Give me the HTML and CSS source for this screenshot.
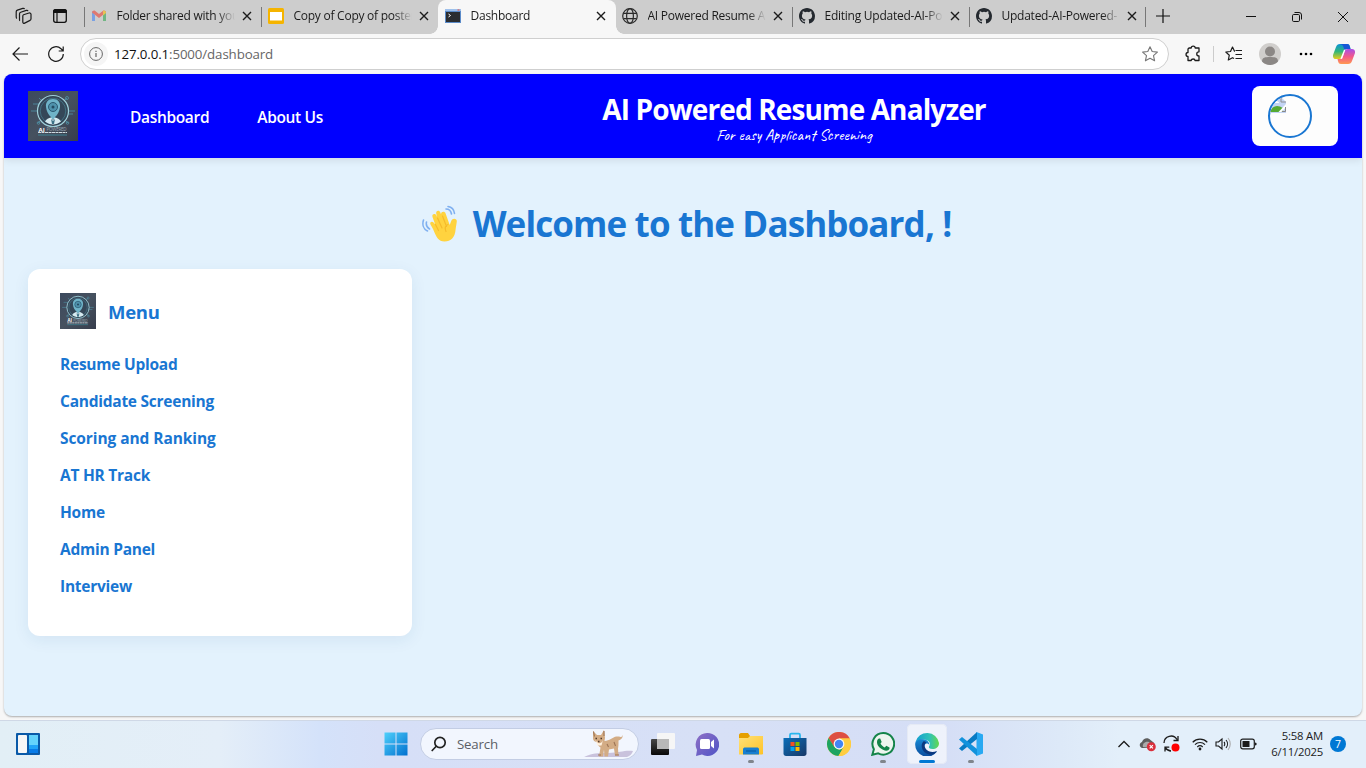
FILE: index.html
```html
<!DOCTYPE html>
<html lang="en">
<head>
<meta charset="utf-8">
<title>Dashboard</title>
<link rel="stylesheet" href="styles.css">
</head>
<body>
<svg class="defs" width="0" height="0" aria-hidden="true">
  <defs>
    <linearGradient id="slate" x1="0" y1="0" x2="1" y2="1"><stop offset="0" stop-color="#3c4a5e"/><stop offset=".5" stop-color="#46515f"/><stop offset="1" stop-color="#373d4c"/></linearGradient>
    <symbol id="logo" viewBox="0 0 50 50">
      <rect width="50" height="50" fill="url(#slate)"/>
      <g fill="none" stroke="#4f93a8" stroke-width=".8"><path d="M3 20h7M40 20h7M5 13h6v4M39 23h6M11 7l3 3M39 7l-3 3M10 32l3-3M40 32l-3-3"/><circle cx="39" cy="7" r="1.5"/><circle cx="10.500" cy="32" r="1.300"/><circle cx="39.500" cy="32" r="1.300"/></g>
      <circle cx="25" cy="20" r="15.500" fill="#354758" stroke="#9fd0da" stroke-width="1.200"/>
      <circle cx="25" cy="20" r="12.800" fill="none" stroke="#457b8d" stroke-width=".8"/>
      <path d="M25 8c-5 0-7.500 3.500-7 8 .4 4 2.500 8 5 10v2h4v-2c2.500-2 4.600-6 5-10 .5-4.500-2-8-7-8z" fill="#6fb3c8"/>
      <circle cx="25" cy="16" r="4.500" fill="#4f92ac" stroke="#2b5a72"/><circle cx="25" cy="16" r="1.500" fill="#244c62"/>
      <path d="M17 30.500c1-2.500 4-3.500 6-4l2 2.500 2-2.500c2 .5 5 1.500 6 4-5 4-11 4-16 0z" fill="#d6eaf0"/><path d="M23 28l2 2 2-2-1 5h-2z" fill="#3b7186"/>
      <text x="10.500" y="40.500" class="logo-ai">AI</text><text x="18.500" y="39.800" class="logo-word" textLength="20">POWERED</text>
      <path d="M10 41.500h29" stroke="#d0dce2" stroke-width="1.200" stroke-dasharray="3 .5"/><path d="M10 44h29" stroke="#3f93a3" stroke-width=".8"/>
    </symbol>
    <symbol id="close" viewBox="0 0 10 10"><path d="M1 1l8 8M9 1L1 9" stroke="#1b1b1b" stroke-width="1.400"/></symbol>
    <symbol id="github" viewBox="0 0 16 16"><path fill="#24292f" d="M8 0C3.580 0 0 3.580 0 8c0 3.540 2.290 6.530 5.470 7.590.4.070.55-.17.55-.38 0-.19-.01-.82-.01-1.490-2.010.37-2.530-.49-2.690-.94-.09-.23-.48-.94-.82-1.130-.28-.15-.68-.52-.01-.53.63-.01 1.080.58 1.230.82.72 1.210 1.870.87 2.330.66.070-.52.28-.87.51-1.070-1.780-.2-3.640-.89-3.640-3.950 0-.87.31-1.590.82-2.150-.08-.2-.36-1.020.08-2.120 0 0 .67-.21 2.200.82a7.400 7.400 0 0 1 4 0c1.530-1.040 2.200-.82 2.200-.82.44 1.100.16 1.920.08 2.120.51.56.82 1.270.82 2.150 0 3.070-1.870 3.750-3.650 3.950.29.25.54.73.54 1.480 0 1.070-.01 1.930-.01 2.200 0 .21.15.46.55.38A8 8 0 0 0 16 8c0-4.420-3.580-8-8-8z"/></symbol>
  </defs>
</svg>

<div class="tabbar">
  <div class="tab-lead">
    <svg width="18" height="18" viewBox="0 0 18 18" fill="none" stroke="#1b1b1b" stroke-width="1.200"><path d="M8.500 7.700l5.500-1.700c1-.3 2 .3 2 1.300v4.500c0 .8-.3 1.300-1 1.600l-5.300 2.700c-1 .5-1.900 0-1.900-1V9.200c0-.8.200-1.300.7-1.500z"/><path d="M5 13.700c-.5-.2-.5-.5-.5-1.200V6.800c0-.9.300-1.300 1.200-1.600l5.600-1.800c.8-.2 1.500.1 1.700.8M2 11.500c-.6-.2-.8-.7-.8-1.400V4.800c0-1 .3-1.400 1.200-1.700l5.400-1.700c.8-.2 1.500.1 1.700.7"/></svg>
    <svg width="16" height="16" viewBox="0 0 16 16"><rect x="1.700" y="1.700" width="12.600" height="12.600" rx="2" fill="none" stroke="#111" stroke-width="1.300"/><path d="M1 5V3.500C1 2 2 1 3.500 1h9C14 1 15 2 15 3.500V5z" fill="#111"/><path d="M5 5v9" stroke="#111" stroke-width="1.200"/></svg>
  </div>
  <div class="tab ruled">
    <svg class="favicon" viewBox="0 0 16 16" opacity=".6"><path d="M1 3v10h3V7z" fill="#4285f4"/><path d="M15 3v10h-3V7z" fill="#34a853"/><path d="M1 4.500C1 2.800 3 2 4.300 3L8 5.900 11.700 3C13 2 15 2.800 15 4.500L8 10z" fill="#ea4335"/><path d="M12 3v4.500l3-2.500c0-2-1.700-3-3-2z" fill="#fbbc04"/></svg>
    <span class="tab-label">Folder shared with you</span><svg class="tab-close"><use href="#close"/></svg>
  </div>
  <div class="tab ruled">
    <svg class="favicon" viewBox="0 0 16 16"><rect width="16" height="16" rx="1.500" fill="#f5b400"/><rect x="2" y="4" width="12" height="8.500" fill="#fff"/></svg>
    <span class="tab-label">Copy of Copy of poster</span><svg class="tab-close"><use href="#close"/></svg>
  </div>
  <div class="tab active">
    <svg class="favicon" viewBox="0 0 16 16"><rect y="1" width="16" height="14" fill="#5b8bc9"/><path d="M0 1h16v2H0z" fill="#9fc1ec"/><path d="M12.500 1.500h2v1h-2z" fill="#f14b3a"/><rect x="1" y="4" width="14" height="10" fill="#2b2d31"/><path d="M3.500 6l2 1.500-2 1.500" fill="none" stroke="#fff"/></svg>
    <span class="tab-label">Dashboard</span><svg class="tab-close"><use href="#close"/></svg>
  </div>
  <div class="tab after-active">
    <svg class="favicon" viewBox="0 0 16 16" fill="none" stroke="#2b2b2b" stroke-width="1.200"><circle cx="8" cy="8" r="7.300"/><ellipse cx="8" cy="8" rx="3.400" ry="7.300"/><path d="M1.500 5.300h13M1.500 10.700h13"/></svg>
    <span class="tab-label">AI Powered Resume A</span><svg class="tab-close"><use href="#close"/></svg>
  </div>
  <div class="tab ruled">
    <svg class="favicon"><use href="#github"/></svg>
    <span class="tab-label">Editing Updated-AI-Po</span><svg class="tab-close"><use href="#close"/></svg>
  </div>
  <div class="tab ruled last">
    <svg class="favicon"><use href="#github"/></svg>
    <span class="tab-label">Updated-AI-Powered-</span><svg class="tab-close"><use href="#close"/></svg>
  </div>
  <div class="new-tab"><svg width="14" height="14" viewBox="0 0 14 14"><path d="M7 0v14M0 7h14" stroke="#111" stroke-width="1.200"/></svg></div>
  <div class="window-controls">
    <svg width="10" height="10" viewBox="0 0 10 10"><path d="M0 4.500h10" stroke="#111"/></svg>
    <svg width="10" height="10" viewBox="0 0 10 10" fill="none" stroke="#111"><rect x=".5" y="2.500" width="7" height="7" rx="1.200"/><path d="M2.500.5H7A2.500 2.500 0 0 1 9.500 3v4.500"/></svg>
    <svg width="10" height="10" viewBox="0 0 10 10"><path d="M0 0l10 10M10 0L0 10" stroke="#111"/></svg>
  </div>
</div>

<div class="toolbar">
  <svg class="nav-icon" width="16" height="14" viewBox="0 0 16 14" fill="none" stroke="#1b1b1b" stroke-width="1.200"><path d="M16 7H1M7.500.5L1 7l6.500 6.500"/></svg>
  <svg class="nav-icon" width="16" height="16" viewBox="0 0 16 16" fill="none" stroke="#1b1b1b" stroke-width="1.200"><path d="M15.300 8A7.300 7.300 0 1 1 13 2.700L15 5M15.200.5V5h-4.500"/></svg>
  <div class="address">
    <span class="site-info"><svg width="14" height="14" viewBox="0 0 14 14" fill="none" stroke="#666"><circle cx="7" cy="7" r="6.400"/><path d="M7 6v4M7 3.700v1.200" stroke-width="1.200"/></svg></span>
    <span class="url"><b>127.0.0.1</b>:5000/dashboard</span>
    <svg width="18" height="18" viewBox="0 0 18 18" fill="none" stroke="#777" stroke-width="1.100" stroke-linejoin="round"><path d="M9 1.700l2.200 4.800 5.200.6-3.900 3.500 1.100 5.200L9 13.300l-4.600 2.500 1.100-5.200L1.600 7.100l5.200-.6z"/></svg>
  </div>
  <div class="toolbar-actions">
    <svg width="16" height="18" viewBox="0 0 16 18" fill="none" stroke="#1b1b1b" stroke-width="1.300" stroke-linejoin="round"><path d="M4 3h2.200c0-2.600 4-2.600 4 0H14v3.800c-3 0-3 4.200 0 4.200v4.500h-4c0-2-3.800-2-3.800 0H3v-4C.4 11.500.4 7.500 3 7.500V4z"/></svg>
    <i class="divider"></i>
    <svg width="18" height="16" viewBox="0 0 18 16" fill="none" stroke="#1b1b1b" stroke-width="1.200" stroke-linejoin="round"><path d="M10 5.200H9.500L7.500 1 5.500 5.500.8 6l3.500 3.200-1 4.800 4.200-2.300L9 12.600M10.500 4.500H17M10.500 8.500H17M10.500 12.500H17"/></svg>
    <svg width="22" height="22" viewBox="0 0 22 22"><circle cx="11" cy="11" r="11" fill="#d0cecc"/><circle cx="11" cy="8.500" r="5" fill="#8b8785"/><path d="M3 18.500C3 14.500 6 14 11 14s8 .5 8 4.500c-4 4.500-12 4.500-16 0z" fill="#8b8785"/></svg>
    <svg width="14" height="4" viewBox="0 0 14 4"><circle cx="2" cy="2" r="1.300"/><circle cx="7" cy="2" r="1.300"/><circle cx="12" cy="2" r="1.300"/></svg>
    <svg width="22" height="22" viewBox="0 0 22 22"><defs><linearGradient id="cpa" x1="0" y1="0" x2="0" y2="1"><stop stop-color="#0a92d8"/><stop offset=".5" stop-color="#32b679"/><stop offset="1" stop-color="#e8cc1c"/></linearGradient><linearGradient id="cpb" x1="0" y1="0" x2="0" y2="1"><stop stop-color="#a94fe8"/><stop offset=".5" stop-color="#f2588b"/><stop offset="1" stop-color="#ff9950"/></linearGradient></defs><path d="M7 1h7c2 0 2.500 1 3 3l.5 2h-3c-2 0-2.800 1-3.300 2.800L9.500 13c-.5 2-1.500 3-3.500 3H3c-2.500 0-3.500-2-2.800-4.500L3 4c.7-2 1.800-3 4-3z" fill="url(#cpa)"/><path d="M7 1h7c2 0 2.500 1 3 3l.5 2h-3c-2 0-2.500.5-3 1.500C10.500 5 11 2 7 1z" fill="#1757d6"/><path d="M15 21H8c-2 0-2.500-1-3-3l-.5-2h2c2 0 3-1 3.500-3l1.500-4.500C12 6.700 13 6 15 6h4c2.500 0 3.500 2 2.800 4.500L19 18c-.7 2-1.800 3-4 3z" fill="url(#cpb)"/><path d="M12.500 6.500L9 16l-1.500-.5L11 6.800z" fill="#fff"/></svg>
  </div>
</div>

<div class="viewport">
  <header class="site-header">
    <svg class="brand-logo"><use href="#logo"/></svg>
    <nav class="site-nav"><a>Dashboard</a><a>About Us</a></nav>
    <div class="site-title"><h2>AI Powered Resume Analyzer</h2><p>For easy Applicant Screening</p></div>
    <div class="user-card">
      <div class="avatar"><svg width="16" height="16" viewBox="0 0 16 16"><path d="M0 0h11l5 5v11H0z" fill="#c3d4f4"/><path d="M0 15V0h11M11 0v5h5" fill="none" stroke="#8e8e8e"/><path d="M2 5a2 2 0 0 1 4-1c2 0 3 1 3 2H2z" fill="#fff"/><path d="M0 15c2-6 7-8 13-4v4z" fill="#55aa33"/><path d="M8.500 15L16 7v3L11.500 15z" fill="#fff"/><path d="M12 14.500h3.500V10" fill="none" stroke="#888"/></svg></div>
    </div>
  </header>
  <h1 class="welcome">
    <svg width="38" height="38" viewBox="0 0 38 38"><g fill="none" stroke="#7fb0f0" stroke-width="1.600" stroke-linecap="round"><path d="M24 4c3 0 5 2 5.500 5M26 1.500c4 .5 6 3 6.500 7M4.500 17c-.7 3 .5 5.500 3 7M1.500 15c-1.500 4.500 0 9 4 11"/></g><path d="M11 24L8.500 19.500c-1.300-2.500 1.700-4 3.300-1.800l1.400 1.800-2.700-7.500c-1-2.800 2.500-4.300 3.800-1.500l.8 1.500-.9-3.500c-.7-3 3-4 4-1.300l.8 2c0-3 4-3.300 4.700-.5l4 11.300 1.500-4c1.200-3.200 6-2.600 5.600.5-.3 3-.9 5-1.200 8C33 32.500 29 36.500 22.500 36.500c-6 0-8-4-11.500-12.500z" fill="#ffd33f"/><path d="M13.500 19.500l3 6M15.500 13l4.500 10M20.500 11l4 10.500M26 19.500c-3 1-3.500 4-2 7" fill="none" stroke="#f5bb2b" stroke-width="1.200" stroke-linecap="round"/></svg>
    <span>Welcome to the Dashboard, !</span>
  </h1>
  <aside class="menu-card">
    <div class="menu-head"><svg class="menu-logo"><use href="#logo"/></svg><h3>Menu</h3></div>
    <ul class="menu-list">
      <li><a>Resume Upload</a></li>
      <li><a>Candidate Screening</a></li>
      <li><a class="wide">Scoring and Ranking</a></li>
      <li><a>AT HR Track</a></li>
      <li><a>Home</a></li>
      <li><a>Admin Panel</a></li>
      <li><a>Interview</a></li>
    </ul>
  </aside>
</div>

<footer class="taskbar">
  <div class="widgets"><svg width="24" height="22" viewBox="0 0 24 22"><rect width="24" height="22" rx="1" fill="#0a5aa8"/><rect x="2" y="2" width="9" height="18" rx="1" fill="#f7f7f7"/><path d="M13 2h9v10h-9z" fill="#63d3fc"/><path d="M13 12h9v4h-9z" fill="#20a4f8"/><path d="M13 16h9v4h-9z" fill="#077be8"/></svg></div>
  <div class="apps">
    <div class="app start"><svg width="24" height="24" viewBox="0 0 24 24"><defs><linearGradient id="win" x1="0" y1="0" x2="1" y2="1"><stop stop-color="#4fd0fb"/><stop offset="1" stop-color="#0070cf"/></linearGradient></defs><path d="M.5.500H11.500V11.500H.5zM12.500.500H23.500V11.500H12.500zM.5 12.500H11.500V23.500H.5zM12.500 12.500H23.500V23.500H12.500z" fill="url(#win)"/></svg></div>
    <div class="search">
      <svg width="16" height="16" viewBox="0 0 16 16" fill="none" stroke="#222" stroke-width="1.700" stroke-linecap="round"><circle cx="9" cy="6.500" r="5.200"/><path d="M5 10.500L1.200 14.500"/></svg>
      <span>Search</span>
      <svg class="lynx" width="50" height="28" viewBox="0 0 50 28"><path d="M0 27c8-4 14-4 24-4 12 0 16-3 25-2-1 3-3 5-6 6z" fill="#c9c2dc"/><path d="M9 8V1l4 4h4l3-5 1 8-.5 3c5 0 8-4 12-4.500 3-.5 4.500 1 5 .500l1-2 0 2c-.5 2-2.500 3-4 3.500 0 4 0 6-.5 8l.5 7h-3.500l-1-7-5 1-1 7h-3.500l-.5-7-1 7h-4l1.500-9c-2-1-3-3-3-5-3-1-4.500-2-4.500-4z" fill="#d3ac85"/><path d="M11 9c2 5 6 6 8 1l-1.500 5.500h-4z" fill="#fff1df"/><path d="M11.500 8.500H13M16.500 8.500H18M14 11.500h1.500" stroke="#513b2e" stroke-width="1.500"/><path d="M9.500 1.500l1 5M20 1v5M23 14l1.500 3M30 12l1.500 4M14 25h3M31 25h4" stroke="#9d7455" stroke-width="1.100"/></svg>
    </div>
    <div class="app"><svg width="24" height="24" viewBox="0 0 24 24"><defs><linearGradient id="tv" x1="0" y1="0" x2="0" y2="1"><stop stop-color="#474747"/><stop offset="1" stop-color="#080808"/></linearGradient></defs><rect x="0" y="7" width="18" height="16" rx="1" fill="url(#tv)"/><rect x="6" y="1" width="18" height="16" rx="1" fill="#f6f6f6"/><path d="M6 7h12v10H6z" fill="#b8b8b8"/></svg></div>
    <div class="app"><svg width="24" height="24" viewBox="0 0 24 24"><defs><linearGradient id="chat" x1="0" y1="0" x2="1" y2="1"><stop stop-color="#8f70c5"/><stop offset="1" stop-color="#4f54c6"/></linearGradient></defs><path d="M12 1a11.500 11.500 0 1 1-5 21.500L1 24l1-6A11.500 11.500 0 0 1 12 1z" fill="url(#chat)"/><rect x="5" y="7" width="10" height="10" rx="1.500" fill="#fff"/><path d="M16 10l3-2.500v9L16 14z" fill="#fff"/></svg></div>
    <div class="app running"><svg width="24" height="24" viewBox="0 0 24 24"><path d="M0 3c0-1 1-2 2-2h7l2 3H24v18H0z" fill="#e5a000"/><defs><linearGradient id="folder" x1="0" y1="0" x2="1" y2="1"><stop stop-color="#ffe179"/><stop offset="1" stop-color="#ffc327"/></linearGradient></defs><path d="M0 6h9l2-2h13v17c0 1-.5 1.500-1.500 1.500H0z" fill="url(#folder)"/><path d="M4 22.500v-5c0-1.500 1-2 2-2h12c1 0 2 .5 2 2v5z" fill="#197fd0"/><path d="M7 19h10" stroke="#09589c"/></svg></div>
    <div class="app"><svg width="24" height="24" viewBox="0 0 24 24"><path d="M7 7V3c0-.8.500-1.300 1.300-1.300h7.400c.8 0 1.300.5 1.300 1.300v4" fill="none" stroke="#29b6ed" stroke-width="1.800"/><defs><linearGradient id="bag" x1="0" y1="0" x2="1" y2="1"><stop stop-color="#0b6eb9"/><stop offset="1" stop-color="#183866"/></linearGradient></defs><path d="M.5 6h23v15.500c0 1.500-1 2.500-2.500 2.500H3C1.500 24 .5 23 .5 21.500z" fill="url(#bag)"/><path d="M7.500 10h4v4h-4z" fill="#f25022"/><path d="M12.500 10h4v4h-4z" fill="#7fba00"/><path d="M7.500 15h4v4h-4z" fill="#00a4ef"/><path d="M12.500 15h4v4h-4z" fill="#ffb900"/></svg></div>
    <div class="app"><svg width="24" height="24" viewBox="0 0 24 24"><circle cx="12" cy="12" r="12" fill="#ffcd40"/><path d="M12 12V6.500h10.700A12 12 0 0 0 1.600 6L7 15z" fill="#dd4f43"/><path d="M1.600 6A12 12 0 0 0 11.500 24l5-9-9.200 0z" fill="#1da462"/><path d="M11.500 24A12 12 0 0 0 22.700 6.500H12z" fill="#ffcd40"/><path d="M7.200 15A5.500 5.500 0 0 0 16.800 15L11.500 24z" fill="#1da462"/><path d="M11.500 24l5.200-9a5.500 5.500 0 0 0-1-7l7 0a12 12 0 0 1-11.200 16z" fill="#ffcd40"/><circle cx="12" cy="12" r="5.400" fill="#f8f8f8"/><circle cx="12" cy="12" r="4.200" fill="#4285f4"/></svg></div>
    <div class="app running"><svg width="24" height="24" viewBox="0 0 24 24"><path d="M12.300 1a10.800 10.800 0 1 1-5.100 20.300L1.300 22.800l1.600-5.600A10.800 10.800 0 0 1 12.300 1z" fill="#edf5ef" stroke="#14844a" stroke-width="2"/><path d="M8 6.500l1.200 0 1.500 3.500-1.200 1.600c1 1.800 2.300 3 4.300 3.900l1.500-1.700 3.200 1.600v1.300c-1 2.200-3.500 2.500-6.500 1-3.500-1.700-6-4.500-6-7.500 0-2 .8-3.200 2-3.700z" fill="#14844a"/></svg></div>
    <div class="app current"><svg width="24" height="24" viewBox="0 0 24 24"><defs><linearGradient id="ea" x1="0" y1="0" x2="1" y2="0"><stop stop-color="#149ed2"/><stop offset=".6" stop-color="#2fc2b6"/><stop offset="1" stop-color="#65d84c"/></linearGradient><linearGradient id="eb" x1="0" y1="0" x2="0" y2="1"><stop stop-color="#1687d3"/><stop offset="1" stop-color="#0b4c9d"/></linearGradient></defs><path d="M.5 10A12 12 0 0 1 24 11c0 4-3 6-6.500 6-3 0-4-1-3.500-2.500C17 10 12 7 8 7.500c-3 .2-6 1.500-7.500 2.500z" fill="url(#ea)"/><path d="M.2 12C.2 8.500 4 7 8 7.300c4 .2 6.500 3 6.200 5.700-.8-2-3.500-2-4.500 0-1.500 4 2.500 9 9 7.600l3.300-1A12 12 0 0 1 .2 12z" fill="url(#eb)"/><path d="M8.800 9C6.500 11 6 14 7.500 17.500c2 4 6 5.300 9.500 5.200 2-.6 4-2 5-3.800-6 3-11.500-.4-12.300-4.300-.4-2 .3-3.600 1.800-4.300z" fill="#0b397f"/></svg></div>
    <div class="app running"><svg width="24" height="24" viewBox="0 0 24 24"><path d="M17.500 0L24 2.500v19L17.500 24z" fill="#28a9f2"/><path d="M18 0v7L3 19 0 16.500z" fill="#087bc4"/><path d="M18 24v-7L3 5 0 7.500z" fill="#1292dc"/></svg></div>
  </div>
  <div class="tray">
    <svg class="t-chevron" width="12" height="8" viewBox="0 0 12 8"><path d="M.5 7L6 1.500 11.500 7" fill="none" stroke="#1b1b1b" stroke-width="1.300"/></svg>
    <svg class="t-cloud" width="18" height="16" viewBox="0 0 18 16"><path d="M3 12C0 11 0 7 3 6c1-4 6-5 8.500-2L14 6c2 1 2 5-1 6z" fill="#5e5e5e"/><path d="M4 11c-1-3 2-6 6-5l3 3v3z" fill="#aaa"/><circle cx="12.300" cy="10.800" r="4.500" fill="#da2f3c"/><path d="M10.700 9.200l3.200 3.200M13.900 9.200l-3.200 3.200" stroke="#fff" stroke-width="1.200"/></svg>
    <svg class="t-sync" width="17" height="18" viewBox="0 0 17 18" fill="none" stroke="#1b1b1b" stroke-width="1.300"><path d="M1 8A7 7 0 0 1 14 4.500M15 1v4.500h-4.500M2 16.500v-4.300h4.300M2 12.500c2 2.500 4 3.500 6 3.500"/><circle cx="12.500" cy="12.500" r="4" fill="#f00" stroke="none"/></svg>
    <svg class="t-wifi" width="16" height="14" viewBox="0 0 16 14" fill="none" stroke="#1b1b1b" stroke-width="1.200"><path d="M.7 5.200a10.400 10.400 0 0 1 14.600 0M3 7.600a7 7 0 0 1 10 0M5.300 10a3.900 3.900 0 0 1 5.400 0"/><circle cx="8" cy="12" r="1.400" fill="#1b1b1b" stroke="none"/></svg>
    <svg class="t-volume" width="16" height="14" viewBox="0 0 16 14" fill="none" stroke="#1b1b1b" stroke-width="1.100"><path d="M1 5v4h2.500L7 12V2L3.500 5zM9 5c1 1 1 3 0 4M11 3c2 2.300 2 5.700 0 8"/><path d="M13 1c3 3.500 3 8.500 0 12" stroke="#aaa"/></svg>
    <svg class="t-battery" width="17" height="12" viewBox="0 0 17 12"><rect x=".7" y="1.200" width="13.600" height="9.600" rx="2" fill="none" stroke="#1b1b1b" stroke-width="1.200"/><rect x="2.500" y="3" width="7" height="6" rx=".5" fill="#1b1b1b"/><path d="M15 4.500l1.500.5v2L15 7.500z" fill="#1b1b1b"/></svg>
    <div class="clock"><span>5:58 AM</span><span>6/11/2025</span></div>
    <span class="count">7</span>
  </div>
</footer>
</body>
</html>
```
FILE: styles.css
```css
* { box-sizing: border-box; }
body { margin: 0; width: 1366px; height: 768px; overflow: hidden; display: flex; flex-direction: column; background: #f7f7f7; font-family: "Open Sans", "Noto Sans", sans-serif; color: #1b1b1b; }
svg { display: block; flex: none; }
.defs { position: absolute; }
h1, h2, h3, p, ul { margin: 0; padding: 0; }

/* Tab strip */
.tabbar { display: flex; height: 34px; flex: none; background: #cdcdcd; }
.tab-lead { width: 84px; display: flex; align-items: center; gap: 19px; padding: 0 0 2px 15px; }
.tab { width: 177px; display: flex; align-items: center; padding: 0 10px 2px 7px; }
.tab.ruled { background: linear-gradient(#777, #777) 0 7px / 1px 20px no-repeat; }
.tab.last { width: 176px; }
.tab.active { position: relative; width: 178px; background: #f7f7f7; border-radius: 8px 8px 0 0; }
.tab.active::before, .tab.active::after { content: ""; position: absolute; bottom: 0; width: 8px; height: 8px; }
.tab.active::before { left: -8px; background: radial-gradient(circle at 0 0, transparent 7.500px, #f7f7f7 8px); }
.tab.active::after { right: -8px; background: radial-gradient(circle at 100% 0, transparent 7.500px, #f7f7f7 8px); }
.tab.after-active { width: 176px; padding-left: 6px; }
.favicon { width: 16px; height: 16px; }
.tab-label { flex: none; width: 118px; margin: 0 7px 0 9.500px; overflow: hidden; white-space: nowrap; font-size: 12px; line-height: 18px; letter-spacing: -.25px; mask-image: linear-gradient(90deg, #000 100px, transparent 118px); }
.tab-close { width: 10px; height: 10px; }
.new-tab { width: 36px; display: flex; align-items: center; justify-content: center; padding-bottom: 3px; background: linear-gradient(#777, #777) 0 7px / 1px 20px no-repeat; }
.window-controls { margin-left: auto; display: flex; align-items: center; gap: 36px; padding-right: 18px; }

/* Address row */
.toolbar { display: flex; align-items: center; height: 40px; flex: none; padding-left: 12px; background: #f7f7f7; }
.nav-icon { margin-right: 20px; }
.nav-icon + .nav-icon { margin-right: 16px; }
.address { width: 1089px; height: 32px; display: flex; align-items: center; padding: 0 9px 0 3px; border: 1px solid #cfcfcf; border-radius: 16px; background: #fff; }
.site-info { width: 24px; height: 24px; display: flex; align-items: center; justify-content: center; border-radius: 50%; background: #f5f5f5; }
.url { flex: 1; margin-left: 6px; font-size: 13.300px; letter-spacing: -.12px; color: #666; }
.url b { font-weight: 400; color: #111; }
.toolbar-actions { display: flex; align-items: center; margin-left: 16px; }
.divider { width: 1px; height: 16px; margin: 0 11px 0 12px; background: #ccc; }
.toolbar-actions svg + svg { margin-left: 16px; }
.toolbar-actions svg:nth-last-child(2) { margin-left: 18px; }
.toolbar-actions svg:last-child { margin-left: 20px; }

/* Page */
.viewport { width: 1358px; height: 642px; flex: none; margin-left: 4px; overflow: hidden; border-radius: 8px; background: #e3f2fd; box-shadow: 0 1px 2px rgba(0, 0, 0, .3); }
.site-header { display: flex; align-items: center; height: 84px; padding: 0 24px; background: #00f; color: #fff; box-shadow: 0 2px 8px rgba(0, 0, 0, .1); }
.brand-logo { width: 50px; height: 50px; }
.logo-ai { font: 700 6px "Open Sans", sans-serif; fill: #fff; }
.logo-word { font: 400 4.500px "Open Sans", sans-serif; fill: #9eabb3; }
.site-nav { display: flex; gap: 48px; margin-left: 52px; width: 472px; padding-top: 2px; font-size: 15.500px; font-weight: 600; letter-spacing: -.33px; white-space: nowrap; }
.site-title { width: 384px; padding-top: 4px; text-align: center; white-space: nowrap; }
.site-title h2 { display: flex; justify-content: center; font-size: 28px; line-height: 34px; font-weight: 700; letter-spacing: -.88px; }
.site-title p { margin-top: -1px; font: 400 16px/20px Caveat, cursive; }
.user-card { width: 86px; height: 60px; margin-left: auto; padding: 8px 16px; border-radius: 8px; background: #fdfdfd; }
.avatar { width: 44px; height: 44px; padding: 1px 0 0; overflow: hidden; border: 2px solid #1976d2; border-radius: 50%; }
.welcome { display: flex; justify-content: center; align-items: center; gap: 13px; height: 44px; margin: 44px 0 23px; padding-left: 7px; color: #1976d2; font-size: 35px; line-height: 44px; font-weight: 700; letter-spacing: -.88px; white-space: nowrap; }
.menu-card { width: 384px; height: 367px; margin-left: 24px; padding: 24px 32px; border-radius: 12px; background: #fff; box-shadow: 0 4px 16px rgba(25, 80, 130, .08); color: #1976d2; }
.menu-head { display: flex; align-items: center; gap: 12px; height: 36px; margin-bottom: 17px; }
.menu-logo { width: 36px; height: 36px; }
.menu-head h3 { font-size: 18.500px; line-height: 26px; font-weight: 700; letter-spacing: -.3px; padding-top: 1px; }
.menu-list { list-style: none; font-size: 15.500px; font-weight: 700; letter-spacing: -.25px; }
.menu-list li { height: 37px; line-height: 37px; }
.menu-list .wide { letter-spacing: -.08px; }

/* Taskbar */
.taskbar { display: flex; align-items: center; height: 48px; flex: none; margin-top: 4px; padding-bottom: 1px; border-top: 1px solid #cfd8e6; background: linear-gradient(90deg, #e2eff6 0, #e4eef8 220px, #d4e2fa 320px, #d6dff7 380px, #d7e0f6 720px, #d5def6 940px, #dde9f8 1060px, #e3effa 1120px, #e3effa 100%); }
.widgets { width: 374px; padding-left: 16px; }
.apps { display: flex; align-items: center; }
.app { position: relative; width: 40px; height: 40px; margin: 0 2px; display: flex; align-items: center; justify-content: center; }
.app.running::after, .app.current::after { content: ""; position: absolute; left: 17px; bottom: 1px; width: 6px; height: 3px; border-radius: 2px; background: #80858c; }
.app.current { background: rgba(255, 255, 255, .6); border-radius: 5px; box-shadow: inset 0 0 0 1px #e5eaf5; }
.app.current::after { left: 12px; width: 16px; background: #0078d4; }
.search { width: 219px; height: 32px; margin: 0 2px; display: flex; align-items: center; padding: 0 4px 0 10px; border: 1px solid #c3cde4; border-radius: 16px; background: #f2f6fe; font-size: 13.300px; color: #5c5f66; }
.search span { margin-left: 10px; letter-spacing: -.2px; }
.lynx { margin-left: auto; }
.tray { display: flex; align-items: center; margin-left: auto; padding-right: 20px; }
.t-cloud { margin-left: 9px; }
.t-sync { margin-left: 6px; }
.t-wifi { margin-left: 12px; }
.t-volume { margin-left: 7px; }
.t-battery { margin-left: 9px; }
.clock { width: 66px; display: flex; flex-direction: column; text-align: right; font-size: 11.300px; line-height: 16px; letter-spacing: -.2px; }
.count { width: 16px; height: 16px; margin-left: 7px; border-radius: 50%; background: #0078d4; color: #fff; font-size: 10.500px; line-height: 16px; text-align: center; }
```
